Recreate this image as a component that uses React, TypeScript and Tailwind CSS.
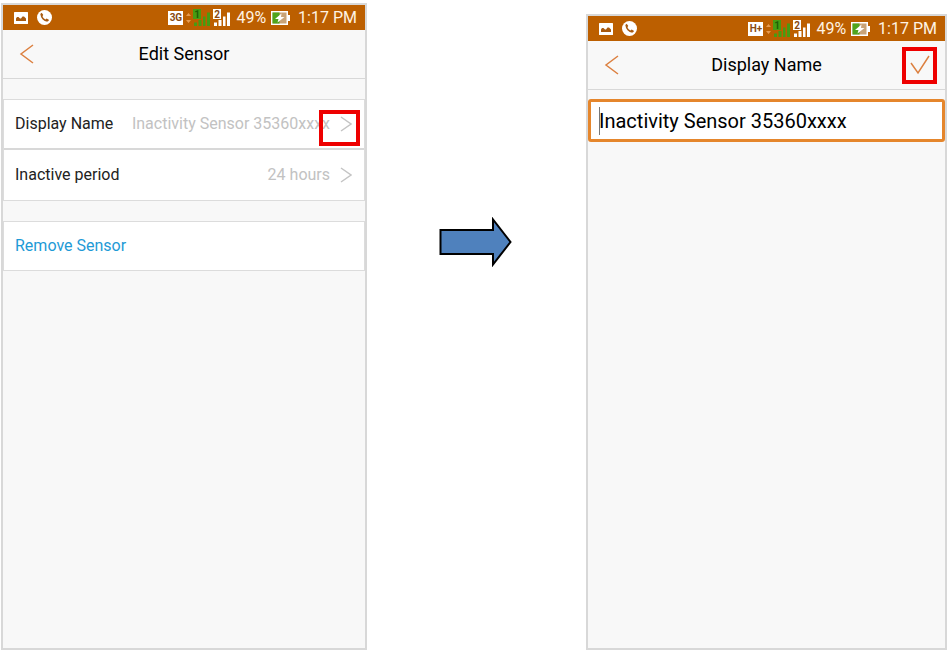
import type { ReactNode } from 'react';

function PictureIcon() {
  return (
    <svg width="14" height="12" viewBox="0 0 14 12" aria-hidden="true">
      <rect width="14" height="12" rx="0.5" fill="#fff" />
      <path d="M2 9V6.500L3 5h1.500L6 6.500h1L8.500 4.500H10L12 6.500V9z" fill="#a85a10" />
    </svg>
  );
}

function CallIcon() {
  return (
    <svg width="15" height="15" viewBox="0 0 15 15" aria-hidden="true">
      <circle cx="7.5" cy="7.5" r="7.5" fill="#fff" />
      <path d="M4.300 4.200c.2 3.300 2.700 6.200 6.200 6.700" fill="none" stroke="#a85a10" strokeWidth="1.800" />
      <path d="m3.300 4 1.400-1.300 1.600 2.200L5 6.300zM8.300 9.500l1.400-1.100 2.400 1.500-1.300 1.700z" fill="#a85a10" />
    </svg>
  );
}

function NetworkBadge({ label }: { label: string }) {
  return (
    <span className="flex h-[14px] w-[15px] items-center justify-center bg-white text-[10px] leading-[14px] font-bold text-[#8a4a10]">
      {label}
    </span>
  );
}

function DataArrows() {
  return (
    <svg width="5" height="14" viewBox="0 0 5 14" className="ml-[3px]" aria-hidden="true">
      <path d="M0 5 2.500 2 5 5zM0 9h5l-2.500 3z" fill="#e59a50" />
    </svg>
  );
}

function SignalIcon({ sim, active }: { sim: string; active?: boolean }) {
  const color = active ? '#479c12' : '#fff';
  return (
    <svg width="18" height="18" viewBox="0 0 18 18" aria-hidden="true">
      <rect width="8" height="10" fill={color} />
      <text
        x="4"
        y="8.500"
        textAnchor="middle"
        fontSize="10"
        fontWeight="700"
        fill={active ? '#1f5f06' : '#8a4a10'}
      >
        {sim}
      </text>
      <path d="M1 13.500h3V17H1zM5.500 11h3v6h-3zM10 7.500h2.500V17H10zM14 3.500h3V17h-3z" fill={color} />
    </svg>
  );
}

function BatteryIcon() {
  return (
    <svg width="19" height="14" viewBox="0 0 19 14" aria-hidden="true">
      <rect x="0.750" y="0.750" width="15.500" height="12.500" fill="#c9a377" stroke="#fff" strokeWidth="1.500" />
      <rect x="1.500" y="1.500" width="7" height="11" fill="#4fa51c" />
      <path d="M17 4h2v6h-2z" fill="#fff" />
      <path d="M10.500 2.500 4 8h3.500l-1 3.500L13.500 6H10z" fill="#fff" />
    </svg>
  );
}

function StatusBar({ network }: { network: string }) {
  return (
    <div className="flex h-[25px] items-center bg-[#bc5f00] pr-2 pl-[11px] text-base leading-6 text-[#fff3e4]">
      <PictureIcon />
      <span className="ml-[9px]">
        <CallIcon />
      </span>
      <div className="ml-auto flex items-center">
        <NetworkBadge label={network} />
        <DataArrows />
        <div className="ml-[2px] flex gap-[2px]">
          <SignalIcon sim="1" active />
          <SignalIcon sim="2" />
        </div>
        <span className="ml-[5px]">49%</span>
        <span className="mr-2 ml-[5px]">
          <BatteryIcon />
        </span>
        <time>1:17 PM</time>
      </div>
    </div>
  );
}

function Header({ title, action }: { title: string; action?: ReactNode }) {
  return (
    <header className="grid h-[49px] grid-cols-[1fr_auto_1fr] items-center border-b border-[#d8d8d8] px-2">
      <button type="button" aria-label="Back" className="justify-self-start px-2">
        <svg width="15" height="20" viewBox="0 0 15 20" fill="none" aria-hidden="true">
          <path d="M14 1 2 10l12 9" stroke="#dc8040" strokeWidth="1.500" />
        </svg>
      </button>
      <h1 className="text-lg text-black">{title}</h1>
      <div className="justify-self-end">{action}</div>
    </header>
  );
}

function Phone({ network, children }: { network: string; children: ReactNode }) {
  return (
    <section className="flex h-full flex-col border-2 border-[#d8d8d8] bg-[#f8f8f8]">
      <StatusBar network={network} />
      {children}
    </section>
  );
}

function SettingRow({ label, value, marked }: { label: string; value: string; marked?: boolean }) {
  return (
    <button type="button" className="relative flex h-[50px] w-full items-center bg-white pr-3 pl-[11px] text-base">
      <span className="text-[#222]">{label}</span>
      <span className="mr-[10px] ml-auto text-[#c2c2c2]">{value}</span>
      <svg width="12" height="16" viewBox="0 0 12 16" fill="none" aria-hidden="true">
        <path d="m1 1 10 7-10 7" stroke="#c4c4c4" strokeWidth="1.500" />
      </svg>
      {marked && <span className="absolute top-[10px] right-1 h-9 w-[41px] border-4 border-[#ee0000]" />}
    </button>
  );
}

function EditSensorScreen() {
  return (
    <Phone network="3G">
      <Header title="Edit Sensor" />
      <div className="mt-5 divide-y-2 divide-[#d8d8d8] border border-[#dcdcdc]">
        <SettingRow label="Display Name" value="Inactivity Sensor 35360xxxx" marked />
        <SettingRow label="Inactive period" value="24 hours" />
      </div>
      <div className="mt-5 border border-[#dcdcdc]">
        <button type="button" className="flex h-12 w-full items-center bg-white pl-[11px] text-base text-[#1e9ad6]">
          Remove Sensor
        </button>
      </div>
    </Phone>
  );
}

function DisplayNameScreen() {
  return (
    <Phone network="H+">
      <Header
        title="Display Name"
        action={
          <button
            type="button"
            aria-label="Save"
            className="flex h-[37px] w-[35px] items-center justify-center border-4 border-[#ee0000]"
          >
            <svg width="20" height="20" viewBox="0 0 20 20" fill="none" aria-hidden="true">
              <path d="m1 8 7 10L19 1" stroke="#dc8040" strokeWidth="1.500" />
            </svg>
          </button>
        }
      />
      <div className="relative mt-[9px]">
        <input
          type="text"
          aria-label="Display Name"
          defaultValue="Inactivity Sensor 35360xxxx"
          className="block h-[43px] w-full rounded-[3px] border-3 border-[#e5862c] bg-white px-2 text-xl text-black outline-none"
        />
        {/* text cursor */}
        <span className="absolute top-2 left-[11px] h-7 w-px bg-[#777]" />
      </div>
    </Phone>
  );
}

function FlowArrow() {
  return (
    <svg width="73" height="50" viewBox="0 0 73 50" aria-hidden="true">
      <path d="M1.500 13H54V2.500L71.500 25 54 47.500V37H1.500z" fill="#4f81bd" stroke="#000" strokeWidth="2" />
    </svg>
  );
}

export default function App() {
  return (
    <main className="grid min-h-screen grid-cols-[366fr_219fr_361fr] bg-white pt-[3px] pr-[5px] pb-2 pl-px font-[Roboto,sans-serif]">
      <EditSensorScreen />
      <div className="flex items-start justify-center pt-[214px] pr-[2px]">
        <FlowArrow />
      </div>
      <div className="pt-[11px]">
        <DisplayNameScreen />
      </div>
    </main>
  );
}
